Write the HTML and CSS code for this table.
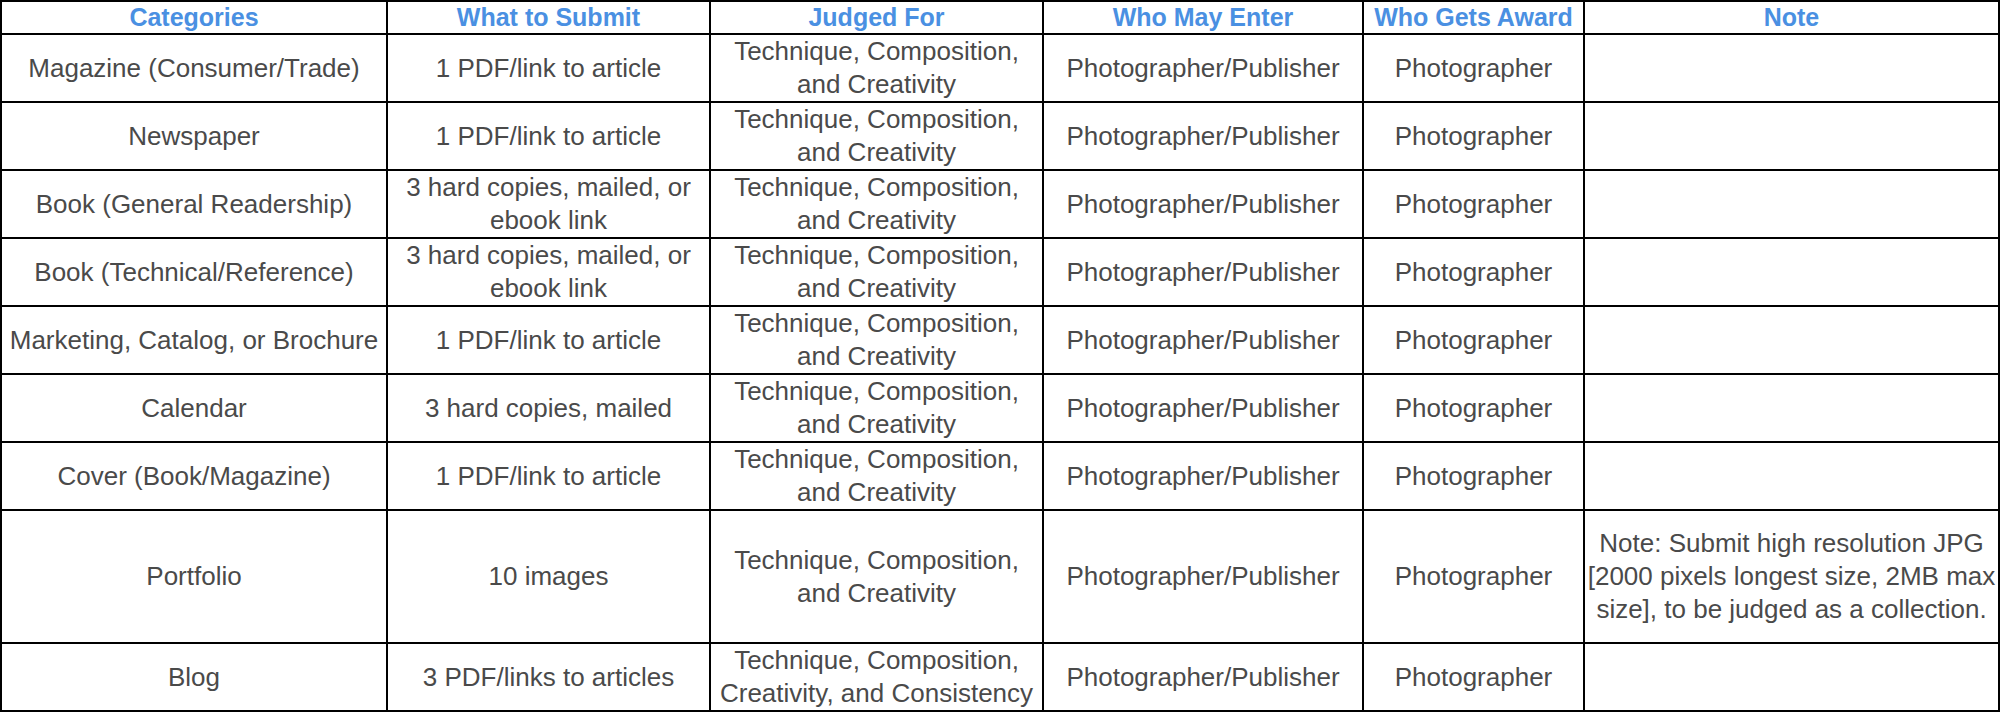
FILE: index.html
```html
<!DOCTYPE html>
<html lang="en">
<head>
<meta charset="utf-8">
<title>Award Categories</title>
<link rel="stylesheet" href="styles.css">
</head>
<body>
<table class="awards">
  <colgroup>
    <col class="c-cat">
    <col class="c-submit">
    <col class="c-judged">
    <col class="c-enter">
    <col class="c-award">
    <col class="c-note">
  </colgroup>
  <thead>
    <tr class="head-row">
      <th>Categories</th>
      <th>What to Submit</th>
      <th>Judged For</th>
      <th>Who May Enter</th>
      <th>Who Gets Award</th>
      <th>Note</th>
    </tr>
  </thead>
  <tbody>
    <tr class="row">
      <td>Magazine (Consumer/Trade)</td>
      <td>1 PDF/link to article</td>
      <td>Technique, Composition,<br>and Creativity</td>
      <td>Photographer/Publisher</td>
      <td>Photographer</td>
      <td></td>
    </tr>
    <tr class="row">
      <td>Newspaper</td>
      <td>1 PDF/link to article</td>
      <td>Technique, Composition,<br>and Creativity</td>
      <td>Photographer/Publisher</td>
      <td>Photographer</td>
      <td></td>
    </tr>
    <tr class="row">
      <td>Book (General Readership)</td>
      <td>3 hard copies, mailed, or<br>ebook link</td>
      <td>Technique, Composition,<br>and Creativity</td>
      <td>Photographer/Publisher</td>
      <td>Photographer</td>
      <td></td>
    </tr>
    <tr class="row">
      <td>Book (Technical/Reference)</td>
      <td>3 hard copies, mailed, or<br>ebook link</td>
      <td>Technique, Composition,<br>and Creativity</td>
      <td>Photographer/Publisher</td>
      <td>Photographer</td>
      <td></td>
    </tr>
    <tr class="row">
      <td>Marketing, Catalog, or Brochure</td>
      <td>1 PDF/link to article</td>
      <td>Technique, Composition,<br>and Creativity</td>
      <td>Photographer/Publisher</td>
      <td>Photographer</td>
      <td></td>
    </tr>
    <tr class="row">
      <td>Calendar</td>
      <td>3 hard copies, mailed</td>
      <td>Technique, Composition,<br>and Creativity</td>
      <td>Photographer/Publisher</td>
      <td>Photographer</td>
      <td></td>
    </tr>
    <tr class="row">
      <td>Cover (Book/Magazine)</td>
      <td>1 PDF/link to article</td>
      <td>Technique, Composition,<br>and Creativity</td>
      <td>Photographer/Publisher</td>
      <td>Photographer</td>
      <td></td>
    </tr>
    <tr class="row row-tall">
      <td>Portfolio</td>
      <td>10 images</td>
      <td>Technique, Composition,<br>and Creativity</td>
      <td>Photographer/Publisher</td>
      <td>Photographer</td>
      <td>Note: Submit high resolution JPG<br>[2000 pixels longest size, 2MB max<br>size], to be judged as a collection.</td>
    </tr>
    <tr class="row">
      <td>Blog</td>
      <td>3 PDF/links to articles</td>
      <td>Technique, Composition,<br>Creativity, and Consistency</td>
      <td>Photographer/Publisher</td>
      <td>Photographer</td>
      <td></td>
    </tr>
  </tbody>
</table>
</body>
</html>
```
FILE: styles.css
```css
html, body {
  margin: 0;
  padding: 0;
  background: #ffffff;
}

.awards {
  table-layout: fixed;
  border-collapse: separate;
  border-spacing: 0;
  width: 2000px;
  border-top: 2px solid #000;
  border-left: 2px solid #000;
  font-family: "Liberation Sans", Arial, Helvetica, sans-serif;
}

.c-cat { width: 386px; }
.c-submit { width: 323px; }
.c-judged { width: 333px; }
.c-enter { width: 320px; }
.c-award { width: 221px; }
.c-note { width: 415px; }

.awards th,
.awards td {
  border-right: 2px solid #000;
  border-bottom: 2px solid #000;
  padding: 0 1px;
  text-align: center;
  vertical-align: middle;
  white-space: nowrap;
  overflow: hidden;
}

.awards th {
  color: #4a90e2;
  font-size: 25px;
  font-weight: bold;
  line-height: 31px;
}

.awards td {
  color: #4a4a4a;
  font-size: 26px;
  line-height: 33px;
}

.head-row { height: 33px; }
.row { height: 68px; }
.row-tall { height: 133px; }
```
